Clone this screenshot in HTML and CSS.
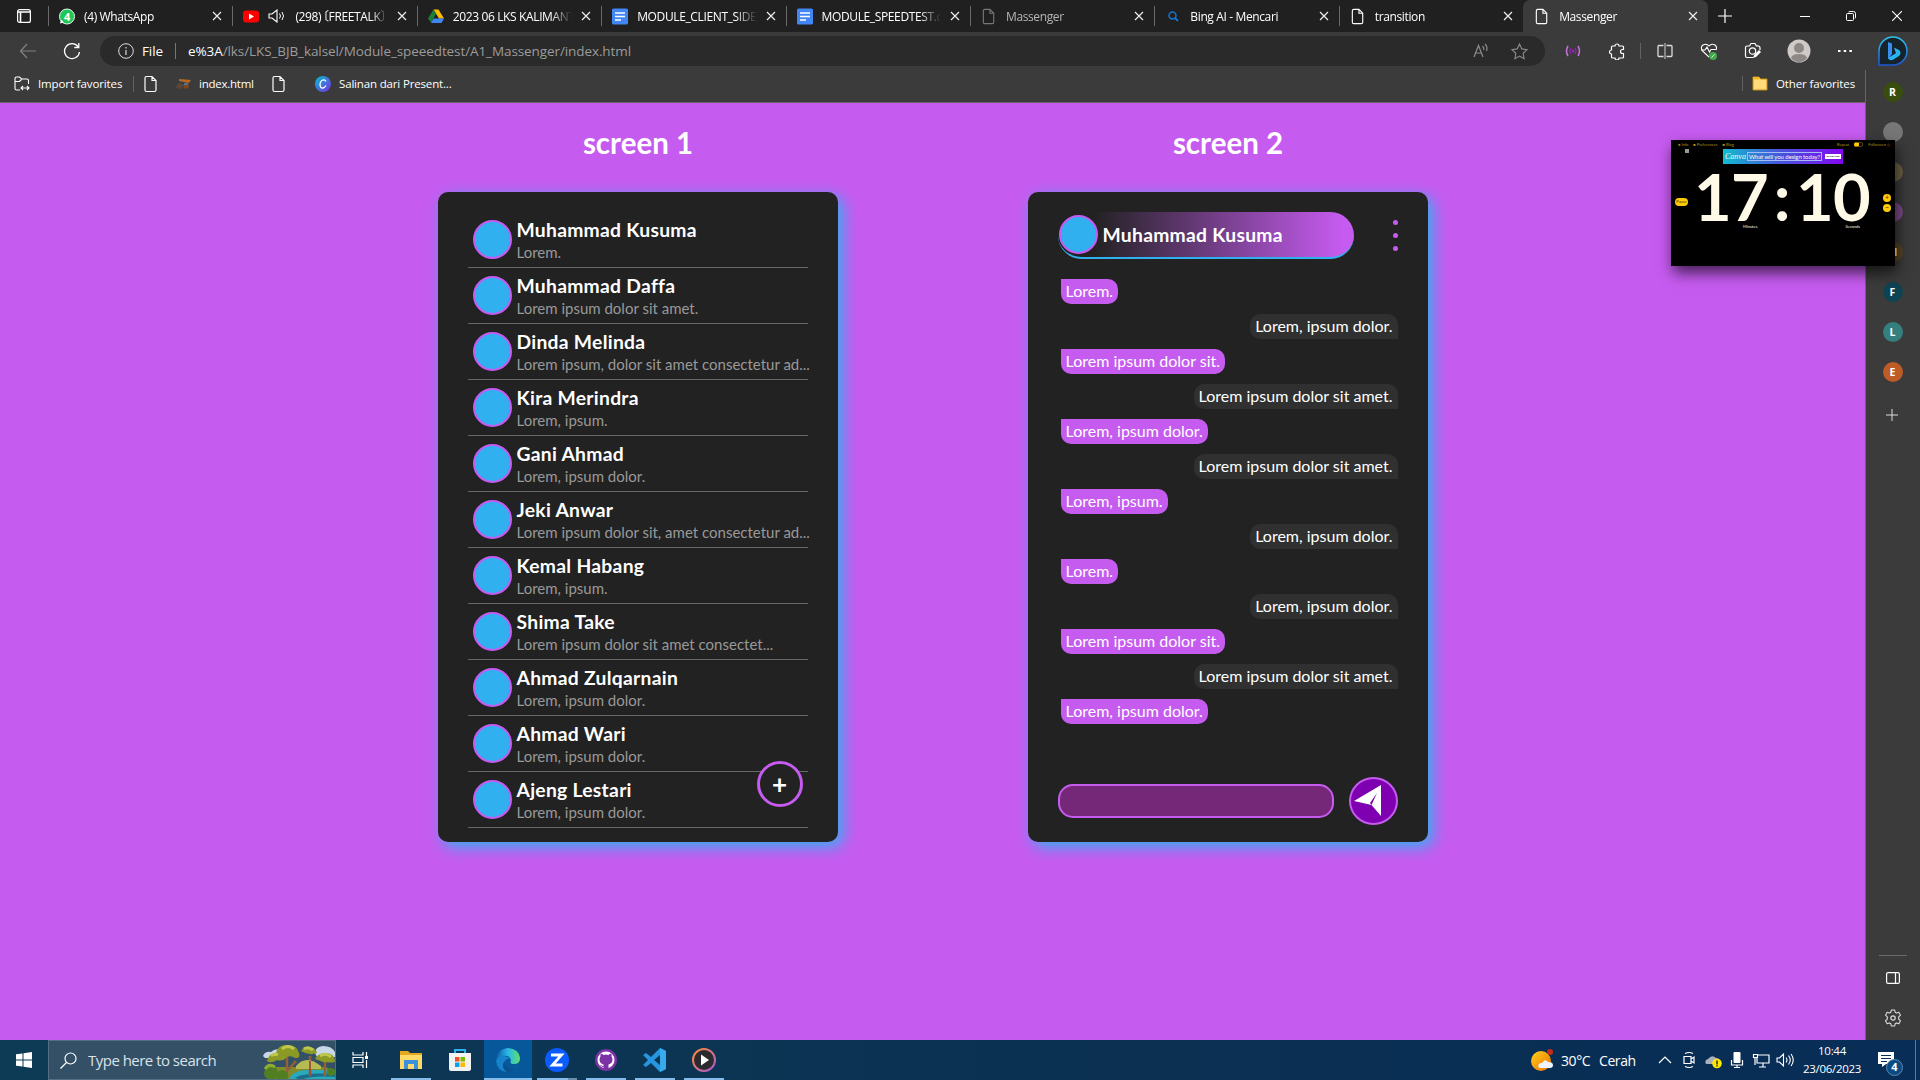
FILE: index.html
```html
<!DOCTYPE html>
<html lang="id">
<head>
<meta charset="utf-8">
<title>Massenger</title>
<link rel="stylesheet" href="styles.css">
</head>
<body>
<svg class="defs" width="0" height="0">
  <defs>
    <symbol id="doc" viewBox="0 0 16 18"><path d="M3.5 1.5h5.5l4 4v9.500q0 1.500-1.500 1.500h-8q-1.500 0-1.500-1.500v-12q0-1.500 1.500-1.500zM9 1.500v4h4" fill="none" stroke="currentColor" stroke-width="1.200"/></symbol>
    <symbol id="x" viewBox="0 0 10 10"><path d="M1 1l8 8M9 1l-8 8" stroke="currentColor" stroke-width="1.200" fill="none"/></symbol>
    <symbol id="gdoc" viewBox="0 0 16 16"><rect width="16" height="16" rx="1.500" fill="#4285f4"/><path d="M3 4.500h10M3 8h10M3 11.500h6" stroke="#fff" stroke-width="1.700"/></symbol>
    <linearGradient id="canva" x1="0" x2="1" y1="0" y2="1"><stop stop-color="#00c4cc"/><stop offset="1" stop-color="#7d2ae8"/></linearGradient>
    <linearGradient id="edge" x1="0" x2="1"><stop stop-color="#0c59a4"/><stop offset=".5" stop-color="#29b8e8"/><stop offset="1" stop-color="#5fe06a"/></linearGradient>
    <linearGradient id="bing" x1="0" x2="0" y1="0" y2="1"><stop stop-color="#2fc4ee"/><stop offset="1" stop-color="#1c56d8"/></linearGradient>
    <linearGradient id="media" x1="0" x2="1" y1="0" y2="1"><stop stop-color="#ff8a3c"/><stop offset="1" stop-color="#a75ad0"/></linearGradient>
    <linearGradient id="sun" x1="0" x2="1" y1="0" y2="1"><stop stop-color="#ffd21c"/><stop offset="1" stop-color="#f07000"/></linearGradient>
  </defs>
</svg>

<header class="tabs">
  <div class="tab-menu"><svg width="14" height="14" viewBox="0 0 14 14"><rect x=".6" y=".6" width="12.800" height="12.800" rx="2" fill="none" stroke="#fff" stroke-width="1.200"/><path d="M1 3h12M3.500 3v10" stroke="#fff" stroke-width="1.600"/></svg></div>
  <div class="tab"><svg class="fav" viewBox="0 0 16 16"><circle cx="8" cy="8" r="7.500" fill="#1fc659" stroke="#e8f8ec"/><path d="M1 15l1-4 3 3z" fill="#fff"/><text x="8" y="12" text-anchor="middle" fill="#fff" class="wa">4</text></svg><span>(4) WhatsApp</span><svg class="x"><use href="#x"/></svg></div>
  <div class="tab"><svg class="fav" viewBox="0 0 16 16"><rect y="2" width="16" height="12" rx="3" fill="#f00"/><path d="M6 5l5 3-5 3z" fill="#fff"/></svg><svg class="speaker" viewBox="0 0 17 14"><path d="M1 5h3l5-4v12l-5-4h-3z" fill="none" stroke="#fff" stroke-width="1.100"/><path d="M11.500 4.500q2 2.500 0 5M14 3q3 4 0 8" fill="none" stroke="#fff"/></svg><span>(298) <b class="bracket">〔</b>FREETALK〕</span><svg class="x"><use href="#x"/></svg></div>
  <div class="tab"><svg class="fav" viewBox="0 0 16 16"><path d="M5.500 1h5L16 10h-5z" fill="#fbbc04"/><path d="M5.500 1L8 5.500 3 14 0 10z" fill="#188038"/><path d="M5.500 10H16l-2.500 4.500h-10.500z" fill="#4285f4"/></svg><span>2023 06 LKS KALIMANT</span><svg class="x"><use href="#x"/></svg></div>
  <div class="tab"><svg class="fav"><use href="#gdoc"/></svg><span>MODULE_CLIENT_SIDE.d</span><svg class="x"><use href="#x"/></svg></div>
  <div class="tab"><svg class="fav"><use href="#gdoc"/></svg><span>MODULE_SPEEDTEST.do</span><svg class="x"><use href="#x"/></svg></div>
  <div class="tab tab-sleep"><svg class="fav"><use href="#doc"/></svg><span>Massenger</span><svg class="x"><use href="#x"/></svg></div>
  <div class="tab"><svg class="fav" viewBox="0 0 16 16"><circle cx="7.500" cy="7" r="3.500" fill="none" stroke="#1277d4" stroke-width="1.500"/><path d="M10 9.500l3 3" stroke="#1277d4" stroke-width="1.800"/></svg><span>Bing AI - Mencari</span><svg class="x"><use href="#x"/></svg></div>
  <div class="tab"><svg class="fav"><use href="#doc"/></svg><span>transition</span><svg class="x"><use href="#x"/></svg></div>
  <div class="tab tab-active"><svg class="fav"><use href="#doc"/></svg><span>Massenger</span><svg class="x"><use href="#x"/></svg></div>
  <div class="new-tab"><svg width="14" height="14"><path d="M7 0v14M0 7h14" stroke="#fff" stroke-width="1.200"/></svg></div>
  <div class="window-buttons">
    <svg viewBox="0 0 10 10"><path d="M0 5.500h10" stroke="#fff"/></svg>
    <svg viewBox="0 0 10 10"><path d="M.5 3.500q0-1 1-1h5q1 0 1 1v5q0 1-1 1h-5q-1 0-1-1zM2.500 1q.5-.5 1.500-.5h3.500q2 0 2 2v3.500q0 1-.5 1.500" stroke="#fff" fill="none"/></svg>
    <svg viewBox="0 0 10 10"><path d="M0 0l10 10M10 0L0 10" stroke="#fff" stroke-width="1.100"/></svg>
  </div>
</header>

<div class="toolbar">
  <div class="nav">
    <svg width="18" height="16" viewBox="0 0 18 16"><path d="M17 8H1.500M8 1L1.500 8 8 15" fill="none" stroke="#828282" stroke-width="1.200"/></svg>
    <svg width="18" height="18" viewBox="0 0 18 18"><path d="M16.500 10a7.500 7.500 0 1 1-1.500-5.500M15.800 1v4.500h-4.500" fill="none" stroke="#fff" stroke-width="1.300"/></svg>
  </div>
  <div class="address">
    <svg width="16" height="16" viewBox="0 0 16 16"><circle cx="8" cy="8" r="7.300" fill="none" stroke="#ddd"/><path d="M8 7v5M8 4v1.500" stroke="#ddd" stroke-width="1.200"/></svg>
    <span class="scheme">File</span>
    <span class="url"><b>e%3A</b>/lks/LKS_BJB_kalsel/Module_speeedtest/A1_Massenger/index.html</span>
    <div class="address-tools">
      <svg width="16" height="16" viewBox="0 0 16 16"><path d="M1 14L5.500 2.500 10 14M2.500 10h6M9.500 3q2 2 1 4M12 1q3 3 1.500 7" fill="none" stroke="#8c8c8c" stroke-width="1.200"/></svg>
      <svg width="17" height="17" viewBox="0 0 17 17"><path d="M8.500 1l2.300 4.900 5.200.7-3.800 3.700.9 5.400-4.600-2.600-4.600 2.600.9-5.400L1 6.600l5.200-.7z" fill="none" stroke="#8c8c8c" stroke-width="1.100"/></svg>
    </div>
  </div>
  <div class="tools">
    <svg viewBox="0 0 18 18"><path d="M4 4q-3 5 0 10M14 4q3 5 0 10" fill="none" stroke="#c377d8" stroke-width="1.500"/><path d="M7 6q-2 3 0 6M11 6q2 3 0 6" fill="none" stroke="#8a24a8" stroke-width="1.500"/><circle cx="9" cy="9" r="1.200" fill="#a32cc0"/></svg>
    <svg viewBox="0 0 18 18"><path d="M7 4a2 2 0 0 1 4 0h3.500q1 0 1 1v2.500h-1a1.800 1.800 0 0 0 0 4h1v3.500q0 1-1 1H11a2 2 0 0 1-4 0H4.500q-1 0-1-1v-3a2 2 0 0 1 0-4V5q0-1 1-1z" fill="none" stroke="#fff" stroke-width="1.200"/></svg>
    <i class="tool-rule"></i>
    <svg viewBox="0 0 18 18"><path d="M7.500 3.500H3q-1 0-1 1v9q0 1 1 1h4.500M10.500 3.500H15q1 0 1 1v9q0 1-1 1h-4.500" fill="none" stroke="#ddd" stroke-width="1.300"/><path d="M9 1v16" stroke="#bbb" stroke-width="1.200"/></svg>
    <svg viewBox="0 0 18 18"><path d="M9 15L2.500 9Q0 5 3 3q3.500-2 6 1 2.500-3 6-1 2.500 2 1 5M1 8h4l2-3 2.500 5L11 7.500h5" fill="none" stroke="#fff" stroke-width="1.100"/><circle cx="13" cy="14" r="4" fill="#44a84c"/><path d="M11.500 15.500l3-3" stroke="#d7f4d9"/></svg>
    <svg viewBox="0 0 18 18"><path d="M9 15.500H3q-1.500 0-1.500-1.500V5.500Q1.500 4 3 4h2.500L7 1.500h4L12.500 4q3.500-.5 3.500 2v2" fill="none" stroke="#fff" stroke-width="1.200"/><circle cx="8.500" cy="9" r="3.200" fill="none" stroke="#fff" stroke-width="1.200"/><path d="M9 16l1-3 5-5 2 2-5 5z" fill="#fff"/></svg>
    <svg class="profile" viewBox="0 0 24 24"><circle cx="12" cy="12" r="11.500" fill="#cfcac7"/><circle cx="12" cy="9" r="5" fill="#8d8885"/><path d="M4 19q1-4 8-4t8 4q-3 4-8 4t-8-4z" fill="#8d8885"/></svg>
    <svg viewBox="0 0 18 18"><path d="M2 9h2.500M7.700 9h2.500M13.400 9h2.500" stroke="#fff" stroke-width="2.200"/></svg>
  </div>
  <svg class="bing" viewBox="0 0 30 30"><path d="M1 29V15A14 14 0 1 1 15 29z" fill="#17232b" stroke="url(#bing)" stroke-width="1.500"/><path d="M10 6l4 1.500v10.500l-4 5z" fill="#3a8cf0"/><path d="M16 11.500l5 2.500q3 3 0 6l-6 3.800q-4 1.200-5-1.800l4-2.500 4-2.200z" fill="#28b3f2"/></svg>
</div>

<div class="middle">
  <div class="left">
    <div class="bookmarks">
      <div class="bm bm-import"><svg width="16" height="16" viewBox="0 0 16 16"><path d="M6 14H2.500Q1 14 1 12.500v-10Q1 1 2.500 1h3l2 2H13q1.500 0 1.500 1.500V8M1 5.500h4.500l2-2M7 12h8M9 10l-2 2 2 2M13 10l2 2-2 2" fill="none" stroke="#fff" stroke-width="1.100"/></svg><span>Import favorites</span></div>
      <svg class="bm-doc1"><use href="#doc"/></svg>
      <svg class="bm-pic" viewBox="0 0 15 12"><path d="M3 1l12 1-2 3-10-2z" fill="#b86a22"/><path d="M2 5l5 1-1 5-6-1z" fill="#5b4637"/><circle cx="10" cy="8" r="2.800" fill="#80461d"/><path d="M8 5h4v2H8z" fill="#52729a"/></svg>
      <span class="bm-index">index.html</span>
      <svg class="bm-doc2"><use href="#doc"/></svg>
      <svg class="bm-canva" viewBox="0 0 16 16"><circle cx="8" cy="8" r="8" fill="url(#canva)"/><path d="M11 5.500q-1-2-3-1.500-3 1-3 5 .5 3.500 3 3 2-.5 3-2.500" fill="none" stroke="#fff" stroke-width="1.300"/></svg>
      <span class="bm-salinan">Salinan dari Present...</span>
      <div class="bm-other"><svg width="16" height="15" viewBox="0 0 16 15"><path d="M1 3.500V1h6l1.500 2H15v11H1z" fill="#ffdc79" stroke="#c78f12"/><path d="M1 1h6v2.500H1z" fill="#f0b928"/></svg><span>Other favorites</span></div>
    </div>
    <main class="page">
      <section class="screen">
        <h1>screen 1</h1>
        <div class="card contacts">
          <ul>
            <li><i class="avatar"></i><div><h2>Muhammad Kusuma</h2><p>Lorem.</p></div></li>
            <li><i class="avatar"></i><div><h2>Muhammad Daffa</h2><p>Lorem ipsum dolor sit amet.</p></div></li>
            <li><i class="avatar"></i><div><h2>Dinda Melinda</h2><p>Lorem ipsum, dolor sit amet consectetur ad...</p></div></li>
            <li><i class="avatar"></i><div><h2>Kira Merindra</h2><p>Lorem, ipsum.</p></div></li>
            <li><i class="avatar"></i><div><h2>Gani Ahmad</h2><p>Lorem, ipsum dolor.</p></div></li>
            <li><i class="avatar"></i><div><h2>Jeki Anwar</h2><p>Lorem ipsum dolor sit, amet consectetur ad...</p></div></li>
            <li><i class="avatar"></i><div><h2>Kemal Habang</h2><p>Lorem, ipsum.</p></div></li>
            <li><i class="avatar"></i><div><h2>Shima Take</h2><p>Lorem ipsum dolor sit amet consectet...</p></div></li>
            <li><i class="avatar"></i><div><h2>Ahmad Zulqarnain</h2><p>Lorem, ipsum dolor.</p></div></li>
            <li><i class="avatar"></i><div><h2>Ahmad Wari</h2><p>Lorem, ipsum dolor.</p></div></li>
            <li><i class="avatar"></i><div><h2>Ajeng Lestari</h2><p>Lorem, ipsum dolor.</p></div></li>
          </ul>
          <button class="add">+</button>
        </div>
      </section>
      <section class="screen">
        <h1>screen 2</h1>
        <div class="card chat">
          <div class="chat-head">
            <div class="chat-name"><i class="avatar"></i><h2>Muhammad Kusuma</h2></div>
            <div class="dots"><i></i><i></i><i></i></div>
          </div>
          <div class="messages">
            <p>Lorem.</p>
            <p class="me">Lorem, ipsum dolor.</p>
            <p>Lorem ipsum dolor sit.</p>
            <p class="me">Lorem ipsum dolor sit amet.</p>
            <p>Lorem, ipsum dolor.</p>
            <p class="me">Lorem ipsum dolor sit amet.</p>
            <p>Lorem, ipsum.</p>
            <p class="me">Lorem, ipsum dolor.</p>
            <p>Lorem.</p>
            <p class="me">Lorem, ipsum dolor.</p>
            <p>Lorem ipsum dolor sit.</p>
            <p class="me">Lorem ipsum dolor sit amet.</p>
            <p>Lorem, ipsum dolor.</p>
          </div>
          <div class="compose"><div class="input"></div><div class="send"><svg width="28" height="32" viewBox="0 0 28 32"><path d="M0 16L27 0v31l-9.500-11z" fill="#fff"/><path d="M23 8l-7 10 1.500 2z" fill="#7d00ab"/></svg></div></div>
        </div>
      </section>
    </main>
  </div>
  <aside class="sidebar">
    <i class="c-r">R</i><i class="c-gray"></i><i class="c-s">S</i><i class="c-s2">S</i><i class="c-m">M</i><i class="c-f">F</i><i class="c-l">L</i><i class="c-e">E</i>
    <svg class="side-plus" viewBox="0 0 12 12"><path d="M6 0v12M0 6h12" stroke="#ddd"/></svg>
    <div class="side-bottom">
      <svg width="14" height="12" viewBox="0 0 14 12"><rect x=".6" y=".6" width="12.800" height="10.800" rx="1.500" fill="none" stroke="#fff" stroke-width="1.200"/><path d="M9.500 1v10" stroke="#fff" stroke-width="1.200"/></svg>
      <svg width="18" height="18" viewBox="0 0 18 18"><path d="M7.300 1h3.400l.5 2.300 1.300.8 2.300-.8 1.700 2.900-1.800 1.700v2.200l1.800 1.700-1.700 2.900-2.300-.8-1.300.8-.5 2.300H7.300l-.5-2.300-1.300-.8-2.300.8-1.700-2.900 1.800-1.700V7.900L1.500 6.200l1.700-2.900 2.300.8 1.300-.8z" fill="none" stroke="#ddd" stroke-width="1.100" stroke-linejoin="round"/><circle cx="9" cy="9" r="2.200" fill="none" stroke="#ddd" stroke-width="1.200"/></svg>
    </div>
  </aside>
</div>

<div class="pip">
  <div class="pip-top"><span>● Info</span><span>■ Preferences</span><span>■ Blog</span><span class="pip-repeat">Repeat</span><i></i><span>Fullscreen ◇</span></div>
  <div class="pip-ad"><em>Canva</em><span>What will you design today?</span><b>Design now</b></div>
  <div class="pip-clock"><span>1</span><span>7</span><span class="colon">:</span><span>1</span><span>0</span></div>
  <div class="pip-labels"><span>Minutes</span><span>Seconds</span></div>
  <div class="pip-pause">Pause</div><div class="pip-plus">+</div><div class="pip-minus">−</div><div class="pip-mark"></div>
</div>

<footer class="taskbar">
  <div class="start"><svg width="16" height="16" viewBox="0 0 16 16"><path d="M0 2.300l6.500-.9v6.100H0zM7.500 1.200L16 0v7.500H7.500zM0 8.500h6.500v6.100L0 13.700zM7.500 8.500H16V16l-8.500-1.200z" fill="#fff"/></svg></div>
  <div class="search">
    <svg width="17" height="17" viewBox="0 0 17 17"><circle cx="10.500" cy="6.500" r="5.500" fill="none" stroke="#fff" stroke-width="1.200"/><path d="M6.500 10.500L.5 16.500" stroke="#fff" stroke-width="1.300"/></svg>
    <span>Type here to search</span>
    <svg class="forest" width="72" height="34" viewBox="0 5 72 34" preserveAspectRatio="none"><path d="M0 16q2-5 8-4 4-4 10-2l-4 8H2zM52 13q0-6 8-7 9 0 12 6v5H54z" fill="#c9d8e8"/><path d="M6 39l4-12h52l10 4v8z" fill="#7e8c2c"/><path d="M26 39q4-9 20-9h26v9z" fill="#28a9bd"/><path d="M32 38q8-6 40-4v3q-25-2-34 3z" fill="#1c6d8c"/><path d="M24 37V18l-6-5M25 30l8-9M47 36V16M62 36V22l6-5" stroke="#93603a" stroke-width="2.500" fill="none"/><path d="M4 21q2-8 9-8 2-9 13-8 8 1 9 6 4 7-3 7-4-3-8-1-4 5-10 3-6 4-10 1zM38 11q3-5 9-4 6 1 7 6-8 3-16-2zM52 19q3-6 10-6 10 0 10 9-10 2-20-3z" fill="#8b9a25"/><path d="M8 16q3-3 7-1M19 9q6-5 12 0M41 9q4-3 9 1M57 16q6-4 11 1" stroke="#c0c74e" stroke-width="3" fill="none"/><path d="M33 26q10-12 25 0v3H33z" fill="#b5bb52"/><path d="M47 35V21" stroke="#a2453a" stroke-width="1.700"/><g fill="#4f7f22"><circle cx="8" cy="33" r="7"/><circle cx="19" cy="36" r="6"/><circle cx="68" cy="32" r="4"/></g><path d="M2 29q4-6 10-2" stroke="#8cac36" stroke-width="3" fill="none"/></svg>
  </div>
  <div class="apps">
    <div class="app taskview"><svg viewBox="0 0 24 24"><path d="M5 4v3h10V4M5 20v-3h10v3M5 9.500h10v5H5zM18.500 4v4M18.500 12v8" fill="none" stroke="#fff" stroke-width="1.200"/><path d="M17 8h3v3h-3z" fill="#fff"/></svg></div>
    <div class="app run"><svg viewBox="0 0 24 24"><path d="M1 3h8l2 2h12v16H1z" fill="#e5a71d"/><path d="M1 7h22v14H1z" fill="#ffd968"/><path d="M5 21v-9h14v9h-4v-5H9v5z" fill="#3b91dc"/></svg></div>
    <div class="app"><svg viewBox="0 0 24 24"><path d="M7 6V2h10v4" fill="none" stroke="#2bb2ee" stroke-width="2"/><path d="M1 5h22v16q0 2-2 2H3q-2 0-2-2z" fill="#f2f2f2"/><path d="M7 9h4.500v4.500H7z" fill="#ef5024"/><path d="M12.500 9H17v4.500h-4.500z" fill="#7fba00"/><path d="M7 14.500h4.500V19H7z" fill="#0aa2e8"/><path d="M12.500 14.500H17V19h-4.500z" fill="#ffb900"/></svg></div>
    <div class="app run active"><svg viewBox="0 0 24 24"><path d="M0 13Q1 1 12 0q11 1 12 10 0 6-6 6-5 0-3-4-1-5-7-4Q2 8 0 13z" fill="url(#edge)"/><path d="M0 13Q2 7 8 8q4 0 6 3-4-1-5 3 0 5 6 6 4 1 7-2-4 7-11 6Q1 23 0 13z" fill="#1683cc"/><path d="M9 14q0 5 6 6 4 1 7-2-4 7-11 6-5-3-4-8 1-3 4-4z" fill="#0b4f91"/></svg></div>
    <div class="app run zoomapp"><svg viewBox="0 0 24 24"><circle cx="12" cy="12" r="12" fill="#0b5cff"/><path d="M6 7h10.500L7.500 17h10" fill="none" stroke="#fff" stroke-width="2.800"/></svg></div>
    <div class="app run"><svg viewBox="0 0 24 24"><circle cx="12" cy="12" r="11" fill="#7b32a5"/><circle cx="12" cy="12" r="8.500" fill="#fff"/><path d="M9.500 21v-4.500q-4-1-4-5 0-2 1-3-.4-1.500.2-2.800 1.500 0 3 1.200 2.300-.6 4.600 0 1.500-1.200 3-1.200.6 1.300.2 2.800 1 1 1 3 0 4-4 5V21z" fill="#7b32a5"/><path d="M9.500 18.500q-2 .3-3-1.500" fill="none" stroke="#7b32a5"/></svg></div>
    <div class="app run"><svg viewBox="0 0 24 24"><path d="M17 0l6 3v18l-6 3-9-9-5 4-3-2 5-5-5-5 3-2 5 4zM17 7l-6 5 6 5z" fill="#2596df" fill-rule="evenodd"/><path d="M17 0l6 3v18l-6 3z" fill="#37abed"/></svg></div>
    <div class="app run"><svg viewBox="0 0 24 24"><circle cx="12" cy="12" r="11" fill="#2b2b2d" stroke="url(#media)" stroke-width="2"/><path d="M9 6.500l8 5.500-8 5.500z" fill="#fff"/></svg></div>
  </div>
  <div class="tray">
    <svg class="weather" viewBox="0 0 24 24"><circle cx="11" cy="13" r="10" fill="url(#sun)"/><path d="M10 20q-3-1-1-4 1-1 3-1 3-5 6-1 5 0 5 3 0 3-3 3z" fill="#eef3ff"/><circle cx="20" cy="4" r="3" fill="#c42b1c"/></svg>
    <span class="temp">30°C</span><span class="sky">Cerah</span>
    <div class="tray-icons">
      <svg viewBox="0 0 18 18"><path d="M3 12l6-6 6 6" fill="none" stroke="#fff" stroke-width="1.200"/></svg>
      <svg viewBox="0 0 18 18"><path d="M4 5.500h7v7H4zM11 8l3-2v6l-3-2M5 2.500q4-2 8 0M5 15.500q4 2 8 0" fill="none" stroke="#fff" stroke-width="1.200"/></svg>
      <svg viewBox="0 0 18 18"><path d="M2 13q-2-4 2-5 4-5 8-1 4 0 4 4l-2 2z" fill="#a8b1bb"/><circle cx="13" cy="12.500" r="4.800" fill="#ffe600"/><path d="M13 9.500v4M13 14.300v1.200" stroke="#222" stroke-width="1.400"/></svg>
      <svg viewBox="0 0 18 18"><rect x="5.500" y="1" width="7" height="11" rx="1" fill="#fff"/><path d="M3.500 9v5h11V9M9 14v2.500M6 16.500h6" fill="none" stroke="#fff" stroke-width="1.200"/></svg>
      <svg viewBox="0 0 18 18"><path d="M6 4h11v8H5V7M1.500 3.500h4v3h-4zM3 7v7M11 12v4M7 16h7" fill="none" stroke="#fff" stroke-width="1.200"/></svg>
      <svg viewBox="0 0 18 18"><path d="M1 7h2.500L7.500 3v12l-4-4H1zM10 6.500q2 2.500 0 5M12.500 4.500q3.500 4.500 0 9M15 3q4.500 6 0 12" fill="none" stroke="#fff" stroke-width="1.100"/></svg>
    </div>
    <div class="clock"><span>10:44</span><span>23/06/2023</span></div>
    <div class="notice"><svg width="16" height="15" viewBox="0 0 16 15"><path d="M0 0h16v12H8l-4 3v-3H0z" fill="#fff"/><path d="M3 3.500h10M3 6.500h10M3 9.500h6" stroke="#0a2c54"/></svg><b>4</b></div>
  </div>
</footer>
</body>
</html>
```
FILE: styles.css
```css
* { box-sizing: border-box; }
body { margin: 0; width: 1920px; height: 1080px; overflow: hidden; display: flex; flex-direction: column; background: #3b3b3b; color: #fff; font: 12px "Open Sans", "Noto Sans", "Noto Sans CJK JP", sans-serif; }
h1, h2, p, ul { margin: 0; padding: 0; }
svg { flex: none; display: block; }
.defs { position: absolute; }

/* Browser tabs */
.tabs { height: 32px; flex: none; display: flex; background: #202020; }
.tab-menu { width: 48px; padding: 9px 0 0 17px; }
.tab { width: 184.400px; flex: none; position: relative; display: flex; align-items: center; padding: 0 10px 0 10px; border-left: 1px solid transparent; letter-spacing: -.37px; }
.tab::before { content: ""; position: absolute; left: -1px; top: 6px; height: 20px; width: 1px; background: #6a6a6a; }
.tab-active::before { display: none; }
.tab-active { background: #3b3b3b; border-radius: 7px 7px 0 0; }
.fav { width: 16px; height: 17px; margin-right: 9px; }
.tab span { flex: 1; overflow: hidden; white-space: nowrap; margin-right: 9px; -webkit-mask-image: linear-gradient(90deg, #000 82%, transparent); mask-image: linear-gradient(90deg, #000 82%, transparent); }
.tab .x { width: 10px; height: 10px; color: #eee; }
.tab-sleep { color: #b5b5b5; }
.tab-sleep .fav { color: #777; }
.speaker { width: 17px; height: 14px; margin-right: 10px; }
.bracket { font-weight: 400; margin-left: -7px; }
.wa { font: bold 11px "Open Sans", sans-serif; }
.new-tab { padding: 9px 0 0 10px; flex: 1; }
.window-buttons { display: flex; gap: 36px; padding: 11px 18px 0 0; }
.window-buttons svg { width: 10px; height: 10px; }

/* Toolbar */
.toolbar { height: 38px; flex: none; display: flex; padding: 4px 12px 4px 19px; }
.nav { width: 81px; display: flex; align-items: center; gap: 26px; }
.address { width: 1445px; height: 30px; border-radius: 15px; background: #2a2a2a; display: flex; align-items: center; padding: 0 17px 0 18px; font-size: 13.500px; }
.scheme { margin-left: 8px; width: 34px; border-right: 1px solid #777; line-height: 16px; letter-spacing: -.1px; }
.url { margin-left: 12px; color: #9c9c9c; letter-spacing: -.09px; white-space: nowrap; }
.url b { font-weight: 400; color: #fff; }
.address-tools { margin-left: auto; display: flex; gap: 22px; align-items: center; }
.tools { display: flex; align-items: center; padding-left: 19px; gap: 26px; }
.tools svg { width: 18px; height: 18px; }
.tool-rule { width: 1px; height: 16px; background: #626262; margin: 0 -11px 0 -12px; }
.tools .profile { width: 24px; height: 24px; margin: 0 -1px; }
.bing { width: 30px; height: 30px; margin-left: auto; }

/* Bookmarks */
.middle { flex: 1; display: flex; min-height: 0; }
.left { flex: 1; display: flex; flex-direction: column; }
.bookmarks { height: 33px; border-bottom: 1px solid #6d6268; display: flex; align-items: center; padding: 0 10px 5px 14px; font-size: 11.500px; letter-spacing: -.12px; white-space: nowrap; }
.bm { display: flex; align-items: center; gap: 8px; }
.bm-import { width: 120px; border-right: 1px solid #626262; }
.bm-doc1, .bm-doc2 { width: 16px; height: 18px; margin-left: 9px; }
.bm-pic { width: 15px; height: 12px; margin-left: 17px; }
.bm-index { margin-left: 8px; width: 72px; letter-spacing: -.25px; }
.bm-doc2 { margin-left: 0; }
.bm-canva { width: 16px; height: 16px; margin-left: 28px; }
.bm-salinan { margin-left: 8px; letter-spacing: -.16px; }
.bm-other { margin-left: auto; display: flex; align-items: center; gap: 8px; border-left: 1px solid #626262; padding-left: 9px; }

/* Page content */
.page { flex: 1; background: #c65bf0; display: flex; justify-content: center; gap: 190px; padding: 22px 0 0 1px; font-family: Lato, "Open Sans", sans-serif; }
.screen { width: 400px; }
.screen h1 { height: 67px; line-height: 35px; text-align: center; font-size: 29.500px; }
.card { height: 650px; background: #222; border-radius: 10px; box-shadow: 5px 5px 15px #31b0ef; position: relative; padding: 20px 30px; }
.contacts ul { list-style: none; }
.contacts li { height: 56px; border-bottom: 1px solid #666; display: flex; gap: 4.500px; padding: 8px 0 0 5px; white-space: nowrap; }
.avatar { width: 39px; height: 39px; flex: none; border-radius: 50%; background: #31b0ef; border: 2px solid #c65bf0; }
h2 { font-size: 19.300px; line-height: 24px; letter-spacing: .28px; }
.contacts h2 { margin-top: -2px; }
.contacts p { font-size: 15px; line-height: 20px; color: #999; }
.add { position: absolute; left: 319px; top: 569px; width: 46px; height: 46px; border-radius: 50%; border: 3px solid #c65bf0; background: #222; color: #fff; font: bold 26px/36px Lato, sans-serif; padding: 0 1px 0 0; }
.chat { display: flex; flex-direction: column; }
.chat-head { display: flex; justify-content: space-between; height: 47px; }
.chat-name { width: 296px; border-bottom: 2px solid #31b0ef; border-radius: 24px; background: linear-gradient(90deg, #222 12%, #c65bf0 96%); display: flex; gap: 4.500px; padding: 3px 0 0 1px; }
.chat-name h2 { margin-top: 8px; }
.dots { width: 5px; padding-top: 8px; display: flex; flex-direction: column; gap: 8px; }
.dots i { width: 5px; height: 5px; border-radius: 50%; background: #c65bf0; }
.messages { display: flex; flex-direction: column; gap: 10px; padding: 20px 0 0 3px; align-items: flex-start; font-size: 16px; }
.messages p { height: 25px; line-height: 24px; padding: 0 5px 0 4.500px; background: #c65bf0; border-radius: 0 10px 10px 10px; white-space: nowrap; }
.messages .me { align-self: flex-end; background: #303030; border-radius: 10px 10px 0 10px; padding: 0 5.500px 0 5px; }
.compose { margin-top: auto; height: 48px; margin-bottom: -3px; display: flex; justify-content: space-between; align-items: center; }
.input { width: 276px; height: 34px; border: 2px solid #c65bf0; border-radius: 15px; background: #752878; }
.send { width: 49px; height: 48px; border: 2px solid #c65bf0; border-radius: 50%; background: #7f00b0; padding: 6px 0 0 3px; }

/* Edge sidebar */
.sidebar { width: 55px; border-left: 1px solid #666; display: flex; flex-direction: column; align-items: center; padding: 12px 0 0 0; gap: 20px; }
.sidebar i { width: 20px; height: 20px; flex: none; border-radius: 50%; font: bold 10.500px/20px "Open Sans", sans-serif; text-align: center; position: relative; left: -.5px; }
.c-r { background: #394d0e; }
.c-gray { background: #777; }
.c-s { background: #716444; }
.c-s2 { background: #7d4b8c; }
.c-m { background: #584523; }
.c-f { background: #0e4354; }
.c-l { background: #35807f; }
.c-e { background: #bd5c27; }
.side-plus { width: 12px; height: 12px; margin-top: 7px; margin-right: 2px; }
.side-bottom { margin: auto 1px 0 0; width: 28px; border-top: 1px solid #6b6b6b; height: 85px; display: flex; flex-direction: column; align-items: center; padding-top: 16px; gap: 25px; }

/* Floating timer window */
.pip { position: absolute; left: 1671px; top: 140px; width: 224px; height: 126px; background: #000; box-shadow: 2px 7px 14px rgba(0,0,0,.65); color: #fff9e8; font-family: Lato, sans-serif; }
.pip-top { height: 9px; display: flex; gap: 5px; padding: 0 5px 0 7px; color: #b59412; font-size: 4px; line-height: 7px; align-items: center; }
.pip-repeat { margin-left: auto; }
.pip-top i { width: 9px; height: 5px; border-radius: 3px; border: 1px solid #554610; border-left: 5px solid #ffca0a; }
.pip-ad { margin-left: 52px; width: 120px; height: 15px; display: flex; align-items: center; gap: 3px; padding: 0 2px; background: linear-gradient(90deg, #12bcd0, #4559dc 45%, #8208f0); white-space: nowrap; }
.pip-ad em { font: italic 8px "Liberation Serif", serif; width: 19px; }
.pip-ad span { border: 1px solid #a3bcf2; font-size: 6px; line-height: 7px; width: 75px; text-align: center; letter-spacing: -.1px; overflow: hidden; }
.pip-ad b { background: #fff; color: #334; font-size: 2.500px; line-height: 5px; width: 16px; text-align: center; }
.pip-clock { display: flex; height: 58px; padding-left: 23px; font: bold 65px/65px Lato, sans-serif; }
.pip-clock span { width: 37px; text-align: center; }
.pip-clock .colon { width: 28px; }
.pip-labels { display: flex; justify-content: space-between; padding: 0 35px 0 72px; font-size: 4px; line-height: 9px; }
.pip-pause, .pip-plus, .pip-minus { position: absolute; background: #ffca0a; color: #433500; border-radius: 5px; text-align: center; font: 4px/8px Lato, sans-serif; }
.pip-pause { left: 4px; top: 58px; width: 13px; height: 8px; }
.pip-plus, .pip-minus { left: 212px; top: 54px; width: 8px; height: 8px; font-size: 7px; line-height: 7px; }
.pip-minus { top: 64px; }
.pip-mark { position: absolute; left: 14px; top: 9px; width: 4px; height: 4px; background: #999; }

/* Windows taskbar */
.taskbar { height: 40px; flex: none; display: flex; background: linear-gradient(90deg, #0d3a54, #0b3052 60%, #082d57); }
.start { width: 48px; padding: 12px 0 0 16px; }
.search { width: 288px; background: #335067; border: 1px solid #566e81; display: flex; align-items: center; padding-left: 11px; font-size: 15px; color: #dbe2e8; }
.search span { margin-left: 11px; width: 175px; letter-spacing: -.52px; white-space: nowrap; }
.search .forest { align-self: flex-end; }
.apps { display: flex; padding-left: 1px; }
.app { width: 49px; display: flex; justify-content: center; align-items: center; position: relative; }
.app svg { width: 24px; height: 24px; }
.taskview { padding-right: 3px; }
.app.run::after { content: ""; position: absolute; bottom: 0; left: 5px; right: 4px; height: 2px; background: #86bce9; }
.app.active { background: #07589a; width: 48px; }
.app.active::after { left: 0; right: 0; }
.app.zoomapp::after { background: linear-gradient(90deg, #86bce9 31px, #6b8faa 31px); }
.tray { margin-left: auto; display: flex; align-items: center; padding-right: 4px; font-size: 14px; }
.weather { width: 24px; height: 24px; margin-right: 7px; }
.temp, .sky { letter-spacing: -.42px; }
.temp { width: 38px; }
.sky { width: 57px; }
.tray-icons { display: flex; gap: 6px; }
.tray-icons svg { width: 18px; height: 18px; }
.clock { width: 64px; margin-left: 6px; display: flex; flex-direction: column; align-items: center; font-size: 11.500px; line-height: 18px; letter-spacing: -.3px; }
.notice { position: relative; width: 38px; height: 40px; margin-left: 14px; padding: 12px 0 0 0; border-right: 1px solid #65788e; }
.notice b { position: absolute; left: 8px; top: 19px; width: 17px; height: 17px; border-radius: 50%; border: 1px solid #5d88ae; background: #0b4b83; font-size: 11px; line-height: 14px; text-align: center; }
```
